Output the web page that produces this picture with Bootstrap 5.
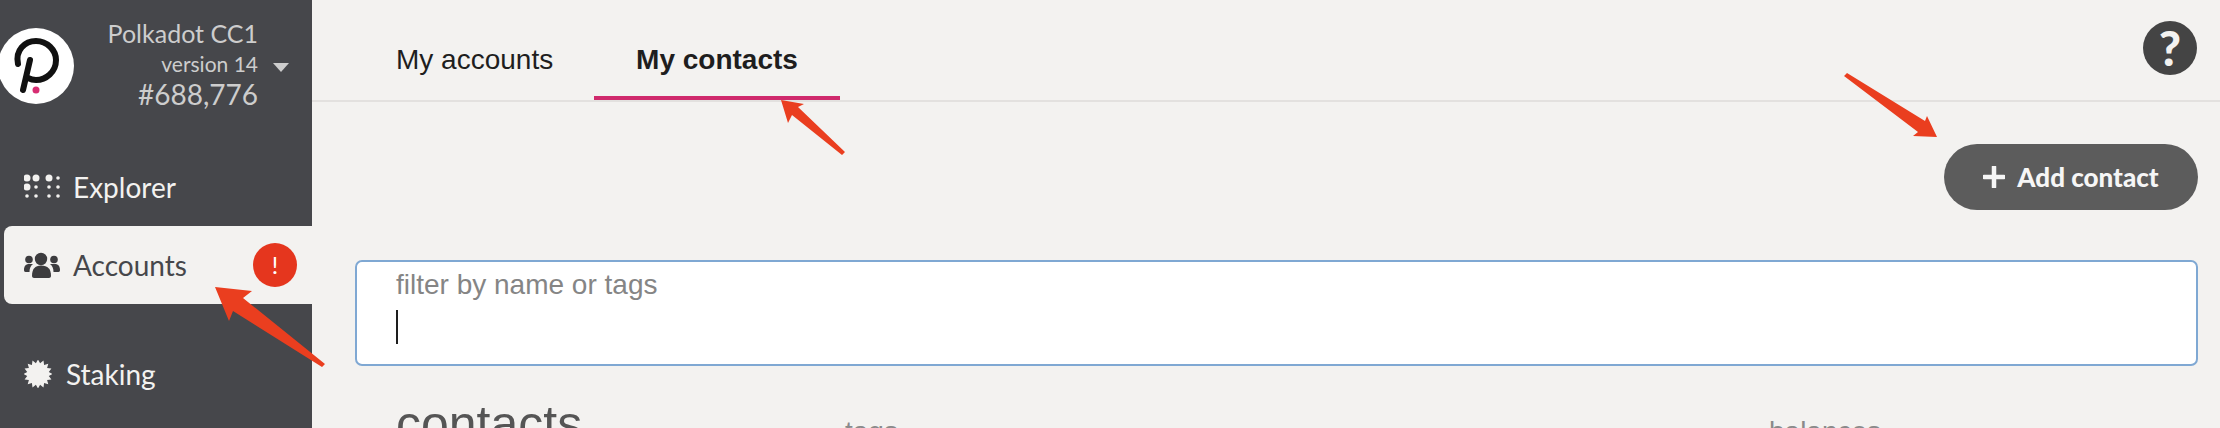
<!DOCTYPE html>
<html lang="en">
<head>
    <meta charset="UTF-8">
    <meta name="viewport" content="width=device-width, initial-scale=1.0">
    <title>Polkadot Apps - My contacts</title>
    <link href="https://cdn.jsdelivr.net/npm/bootstrap@5.3.0/dist/css/bootstrap.min.css" rel="stylesheet">
    <style>
        :root {
            --side-bg: #46474b;
            --page-bg: #f3f2f0;
            --alert-red: #e5361e;
            --tab-pink: #cf2a6c;
        }

        html, body {
            height: 428px;
            overflow: hidden;
        }

        body {
            font-family: "Liberation Sans", Arial, sans-serif;
            background-color: var(--page-bg);
            color: #1e1e1e;
        }

        .app-shell {
            height: 428px;
        }

        /* sidebar */
        .side-panel {
            width: 312px;
            background-color: var(--side-bg);
            font-family: Lato, sans-serif;
        }

        .chain-head {
            height: 112px;
            padding-top: 10px;
        }

        .chain-logo {
            width: 76px;
            height: 76px;
            margin: 18px 0 0 -2px;
        }

        .chain-info {
            width: 184px;
            color: #cdcdcd;
            line-height: 1;
        }

        .chain-name {
            font-size: 25px;
            padding-top: 11px;
        }

        .chain-version {
            font-size: 21px;
            padding-top: 7px;
        }

        .chain-block {
            font-size: 28px;
            padding-top: 6px;
        }

        .chain-caret {
            width: 0;
            height: 0;
            margin: 53px 0 0 15px;
            border-left: 8px solid transparent;
            border-right: 8px solid transparent;
            border-top: 9px solid #cdcdcd;
        }

        .side-item {
            height: 78px;
            padding-left: 24px;
            font-size: 28px;
            color: #f3f2f0;
        }

        .side-icon {
            width: 36px;
            height: 26px;
            flex: none;
        }

        .side-label {
            margin-left: 13px;
        }

        .side-item.is-current {
            margin-left: 4px;
            padding-left: 20px;
            margin-top: 7px;
            color: var(--side-bg);
            background-color: var(--page-bg);
            border-radius: 8px 0 0 8px;
        }

        .side-explorer {
            margin-top: 42px;
            height: 65px;
        }

        .side-staking {
            margin-top: 31px;
        }

        .side-staking .side-label {
            margin-left: 14px;
        }

        .stake-icon {
            width: 28px;
            height: 28px;
            flex: none;
        }

        .alert-dot {
            width: 44px;
            height: 44px;
            margin-right: 15px;
            border-radius: 50%;
            background-color: var(--alert-red);
            color: #fff;
            font-size: 24px;
            font-weight: 400;
        }

        /* main area */
        .tab-strip {
            height: 102px;
            border-bottom: 2px solid #e3e1df;
        }

        .tab-link {
            font-size: 28px;
            color: #1e1e1e;
            text-decoration: none;
            height: 102px;
            padding-top: 42px;
            line-height: 36px;
        }

        .tab-first {
            margin-left: 84px;
            width: 198px;
        }

        .tab-active {
            width: 246px;
            height: 100px;
            font-weight: 700;
            text-align: center;
            border-bottom: 4px solid var(--tab-pink);
        }

        .help-dot {
            width: 54px;
            height: 54px;
            margin: 21px 23px 0 0;
            border-radius: 50%;
            background-color: #444;
            color: #f3f2f0;
            font-family: Lato, sans-serif;
            font-size: 48px;
            font-weight: 900;
            line-height: 1;
        }

        .add-btn {
            width: 254px;
            height: 66px;
            margin: 42px 22px 0 0;
            border: 0;
            border-radius: 33px;
            background-color: #5c5c5c;
            color: #f6f6f6;
            font-family: Lato, sans-serif;
            font-size: 26px;
            font-weight: 900;
        }

        .add-btn:hover {
            background-color: #4c4c4c;
            color: #fff;
        }

        .filter-box {
            height: 106px;
            margin: 50px 22px 0 43px;
            padding: 8px 0 0 39px;
            border: 2px solid #7fa8d3;
            border-radius: 7px;
            background-color: #fff;
        }

        .filter-label {
            display: block;
            font-size: 28px;
            line-height: 30px;
            color: #858585;
            margin: 0;
        }

        .filter-caret {
            display: block;
            width: 2px;
            height: 34px;
            margin-top: 10px;
            background-color: #1e1e1e;
        }

        .list-head {
            padding-left: 84px;
            margin-top: 33px;
            color: #8a8a8a;
            font-size: 28px;
            line-height: 1;
        }

        .list-title {
            width: 449px;
            font-size: 50px;
            color: #555;
        }

        .list-tags {
            width: 924px;
        }

        .arrow-layer {
            position: absolute;
            top: 0;
            left: 0;
            pointer-events: none;
        }
    </style>
</head>
<body>
    <div class="app-shell d-flex overflow-hidden">
        <aside class="side-panel flex-shrink-0 d-flex flex-column">
            <div class="chain-head d-flex">
                <svg class="chain-logo flex-shrink-0" viewBox="0 0 76 76">
                    <circle cx="38" cy="38" r="38" fill="#fff"/>
                    <g transform="translate(2 -28)" fill="none" stroke="#111" stroke-width="6" stroke-linecap="round">
                        <path d="M18 64 C15 50 25 41 36 41 C47 41 56 50 56 60 C56 72 46 80 36 80 C33 80 30 79 28 78"/>
                        <path d="M30 60 L23 90"/>
                    </g>
                    <circle cx="38" cy="62" r="3.5" fill="#d72d72"/>
                </svg>
                <div class="chain-info text-end">
                    <div class="chain-name">Polkadot CC1</div>
                    <div class="chain-version">version 14</div>
                    <div class="chain-block">#688,776</div>
                </div>
                <span class="chain-caret"></span>
            </div>

            <a class="side-item side-explorer d-flex align-items-center text-decoration-none">
                <svg class="side-icon" viewBox="0 0 36 26" fill="#f3f2f0">
                    <circle cx="3" cy="4" r="3.5"/><circle cx="12" cy="4" r="3.5"/><circle cx="25" cy="4" r="3.5"/><circle cx="34" cy="4" r="1.8"/>
                    <circle cx="3" cy="13" r="3.5"/><circle cx="12" cy="13" r="1.8"/><circle cx="25" cy="13" r="1.8"/><circle cx="34" cy="13" r="1.8"/>
                    <circle cx="3" cy="22" r="1.8"/><circle cx="12" cy="22" r="1.8"/><circle cx="25" cy="22" r="1.8"/><circle cx="34" cy="22" r="1.8"/>
                </svg>
                <span class="side-label">Explorer</span>
            </a>

            <a class="side-item is-current d-flex align-items-center text-decoration-none">
                <svg class="side-icon" viewBox="0 0 36 26" fill="#3c3c3e">
                    <circle cx="17" cy="7" r="6.2"/>
                    <circle cx="5" cy="7.5" r="3.8"/><circle cx="30" cy="7.5" r="3.8"/>
                    <path d="M8 24 C8 17 11 13.5 17 13.5 C24 13.5 27 17 27 24 C27 25 26 26 25 26 L10 26 C9 26 8 25 8 24Z"/>
                    <path d="M0 18 C0 14 2 12 5 12 L9 12 C6.5 14 5.5 16.5 5.5 20 L1.5 20 C.5 20 0 19 0 18Z"/>
                    <path d="M36 18 C36 14 34 12 31 12 L26 12 C28.5 14 29.5 16.5 29.5 20 L34.5 20 C35.5 20 36 19 36 18Z"/>
                </svg>
                <span class="side-label flex-grow-1">Accounts</span>
                <span class="alert-dot d-flex align-items-center justify-content-center">!</span>
            </a>

            <a class="side-item side-staking d-flex align-items-center text-decoration-none">
                <svg class="stake-icon" viewBox="0 0 28 28">
                    <polygon id="stakeStar" fill="#f3f2f0"/>
                </svg>
                <span class="side-label">Staking</span>
            </a>
        </aside>

        <main class="flex-grow-1 overflow-hidden">
            <div class="tab-strip d-flex">
                <a class="tab-link tab-first">My accounts</a>
                <a class="tab-link tab-active">My contacts</a>
                <div class="ms-auto">
                    <div class="help-dot d-flex align-items-center justify-content-center">?</div>
                </div>
            </div>

            <div class="d-flex justify-content-end">
                <button class="btn add-btn d-flex align-items-center justify-content-center" type="button">
                    <svg width="22" height="22" viewBox="0 0 22 22" class="me-2 flex-shrink-0"><path d="M11 1 V21 M1 11 H21" stroke="#f6f6f6" stroke-width="4.5" stroke-linecap="round"/></svg>
                    <span class="ms-1">Add contact</span>
                </button>
            </div>

            <div class="filter-box">
                <label class="filter-label">filter by name or tags</label>
                <span class="filter-caret"></span>
            </div>

            <div class="list-head d-flex align-items-baseline">
                <div class="list-title">contacts</div>
                <div class="list-tags">tags</div>
                <div>balances</div>
            </div>
        </main>
    </div>

    <!-- red annotation arrows -->
    <svg class="arrow-layer" width="2220" height="428" fill="#ea3e1f">
        <polygon points="215,287 252,291 243,298 325,364 322,367 233,311 229,321"/>
        <polygon points="781,100 804,104 798,107 845,152 842,155 792,115 788,123"/>
        <polygon points="1937,137 1913,136 1918,132 1844,76 1847,73 1925,121 1927,116"/>
    </svg>

    <script src="https://cdn.jsdelivr.net/npm/bootstrap@5.3.0/dist/js/bootstrap.bundle.min.js"></script>
    <script>
        // Staking icon, a round burst with 16 teeth
        const pts = [];
        for (let i = 0; i < 32; i++) {
            const r = i % 2 ? 11 : 14.5;
            const a = i * Math.PI / 16;
            pts.push((14 + r * Math.cos(a)).toFixed(1) + ',' + (14 + r * Math.sin(a)).toFixed(1));
        }
        document.getElementById('stakeStar').setAttribute('points', pts.join(' '));
    </script>
</body>
</html>
